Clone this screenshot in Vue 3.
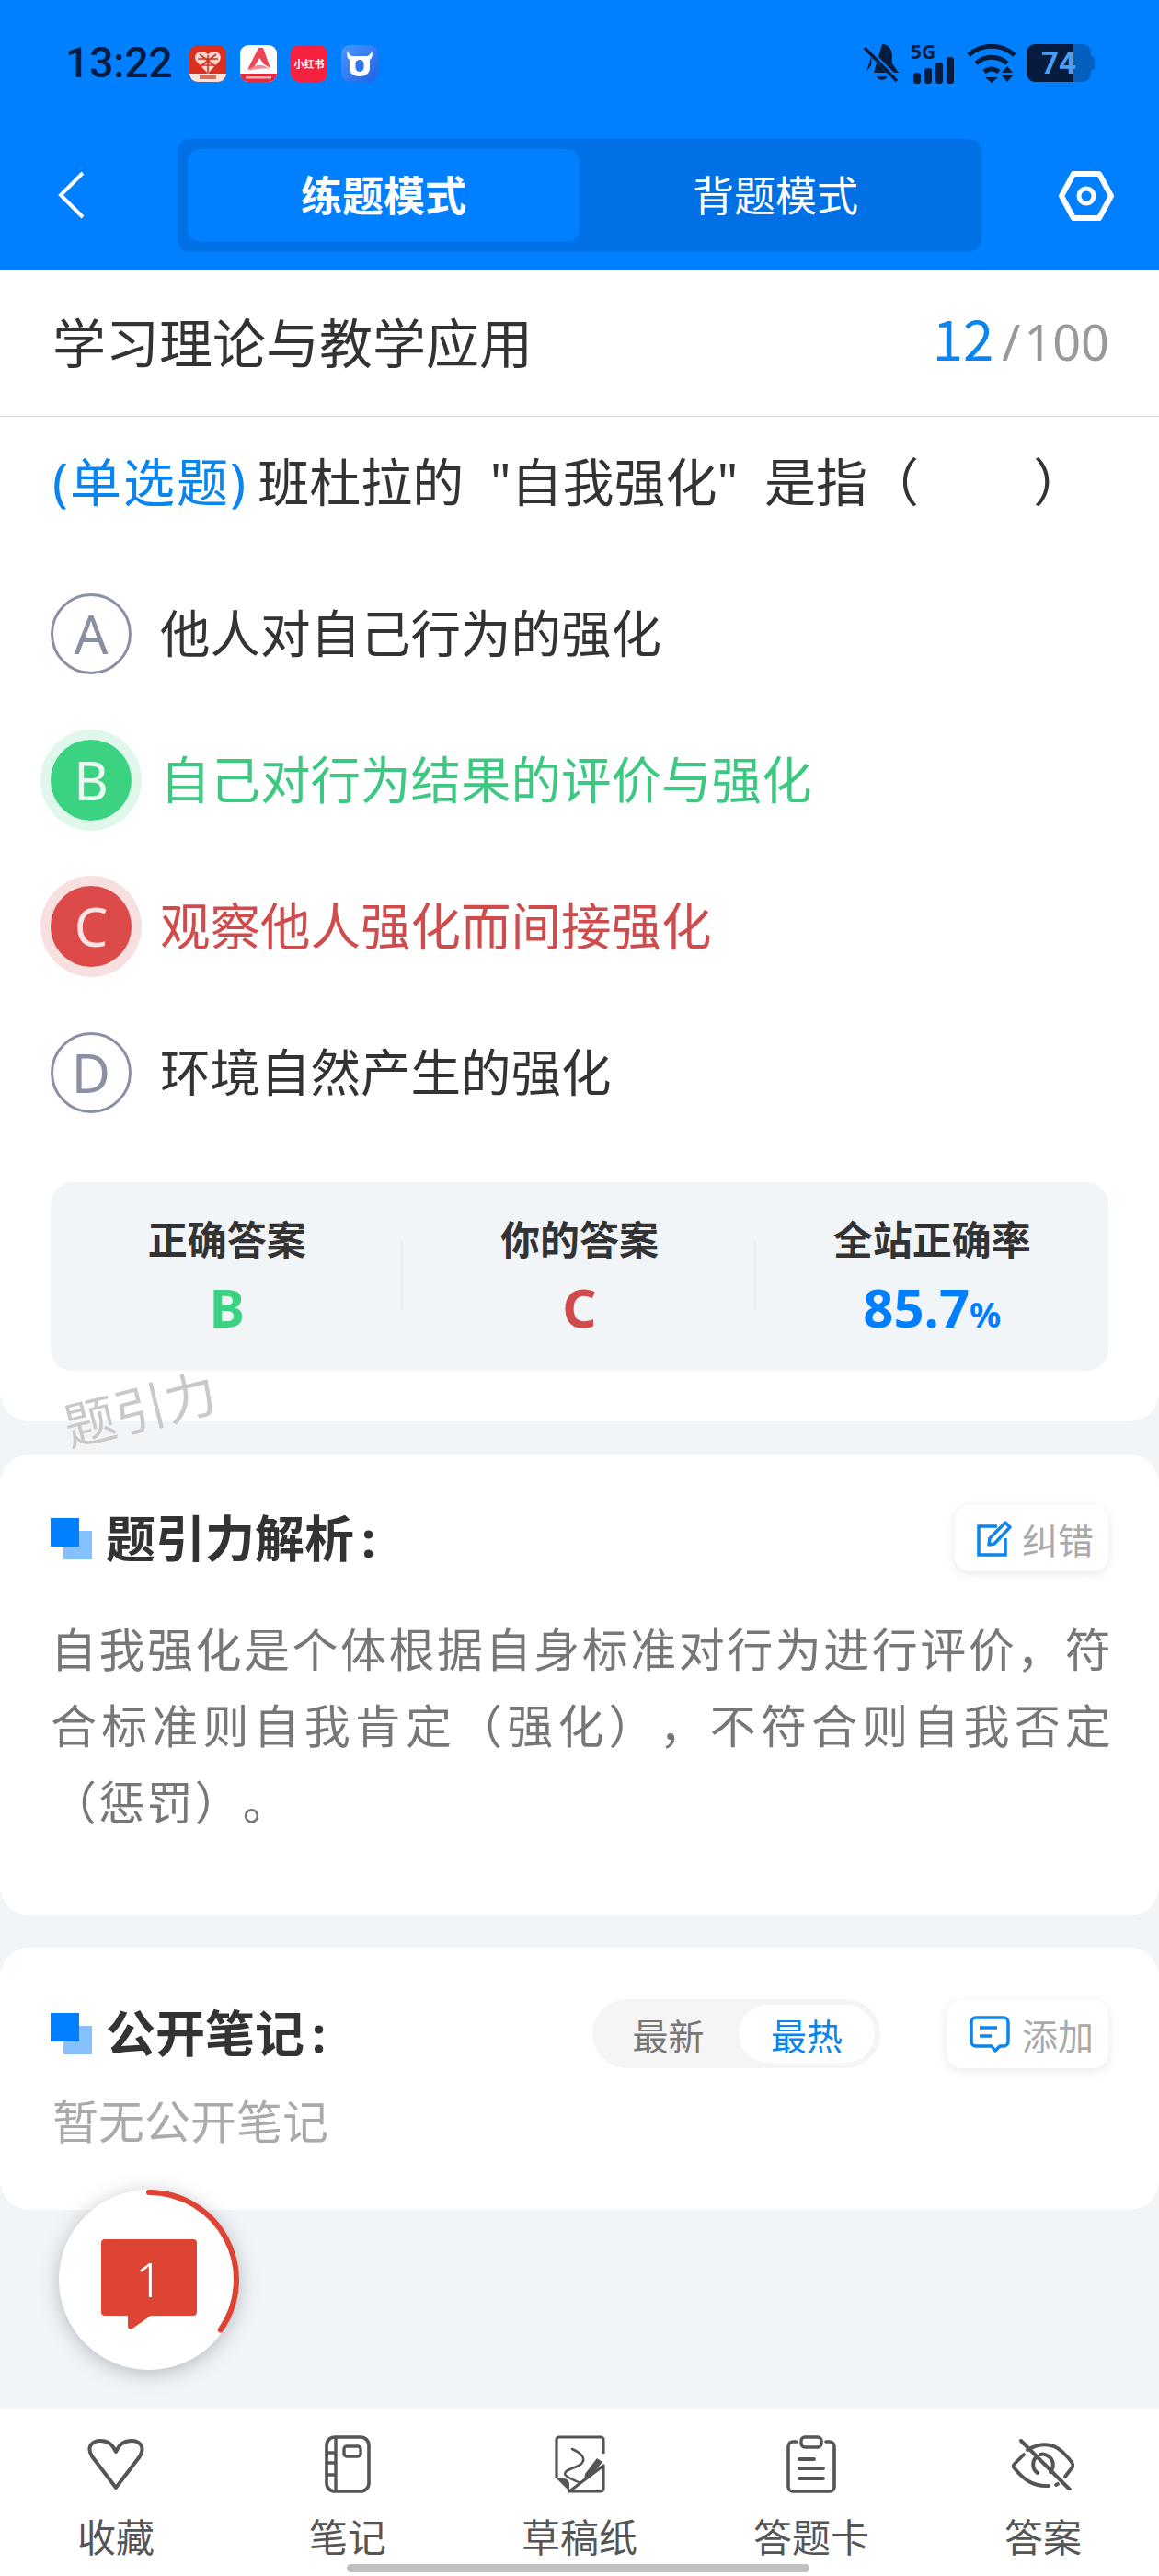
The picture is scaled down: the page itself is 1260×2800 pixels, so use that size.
<template>
  <div class="page">
    <header class="top">
      <div class="status">
        <span class="time">13:22</span>
        <div class="apps">
          <svg class="app" viewBox="0 0 40 40">
            <rect width="40" height="40" rx="9" fill="#d9301f" />
            <path d="M20 31 L7 17 C3 9 13 3 20 10 C27 3 37 9 33 17 Z" fill="#f6d8d0" />
            <path d="M20 11v19M9 15l22 0M12 22l16 0M11 10l18 14M29 10L11 24" stroke="#d9301f" stroke-width="1.6" />
            <path d="M0 31h40v0a9 9 0 0 1-9 9H9a9 9 0 0 1-9-9z" fill="#fbe3dc" />
            <rect x="11" y="33" width="18" height="4" fill="#d9705c" />
          </svg>
          <svg class="app" viewBox="0 0 40 40">
            <rect width="40" height="40" rx="9" fill="#fff" />
            <path d="M8 27 L20 3 L25 3 L33 25 L26 21 L21 14 L15 24 Z" fill="#ee4556" />
            <path d="M9 28 C16 20 24 20 32 26 C24 25 16 26 9 28 Z" fill="#f58a95" />
            <path d="M0 31h40a9 9 0 0 1-9 9H9a9 9 0 0 1-9-9z" fill="#e5283c" />
            <rect x="6" y="34" width="28" height="2.5" fill="#f7b5bb" />
          </svg>
          <div class="app red-book"><span>小红书</span></div>
          <svg class="app" viewBox="0 0 40 40">
            <defs>
              <linearGradient id="ox" x1="0" y1="0" x2="1" y2="1">
                <stop offset="0" stop-color="#4a97fb" />
                <stop offset="1" stop-color="#1f62e6" />
              </linearGradient>
            </defs>
            <rect width="40" height="40" rx="9" fill="url(#ox)" />
            <path d="M7 6 C8 10 10 12 13 12 H27 C30 12 32 10 33 6 C35 11 33 15 31 16 V25 C31 31 26 34 20 34 C14 34 9 31 9 25 V16 C7 15 5 11 7 6 Z" fill="#fff" />
            <rect x="15.5" y="16" width="9" height="13" rx="4.5" fill="#2f77ee" />
          </svg>
        </div>
        <div class="sys">
          <svg width="40" height="44" viewBox="0 0 40 44">
            <path d="M20 1 C28 1 31 8 31 15 L31 22 L38 32 H11 Z M3 31 L8 24 L9 12 Z" fill="#051c3f" />
            <path d="M14 36 H26 C25 41 15 41 14 36 Z" fill="#051c3f" />
            <path d="M2 5 L37 40" stroke="#0080ff" stroke-width="6" />
            <path d="M1 5 L36 41" stroke="#051c3f" stroke-width="3.6" />
          </svg>
          <div class="signal">
            <span class="five-g">5G</span>
            <div class="bars">
              <i style="height: 12px"></i>
              <i style="height: 17px"></i>
              <i style="height: 23px"></i>
              <i style="height: 29px"></i>
            </div>
          </div>
          <svg width="54" height="42" viewBox="0 0 54 42">
            <path d="M2 12 C16 -1 38 -1 52 12" fill="none" stroke="#051c3f" stroke-width="5" />
            <path d="M10 21 C20 12 34 12 44 21" fill="none" stroke="#051c3f" stroke-width="5" />
            <path d="M19 30 C24 26 30 26 35 30" fill="none" stroke="#051c3f" stroke-width="5" />
            <path d="M20 36 H34 L27 42 Z M44 24 L50 31 H38 Z M38 34 H50 L44 41 Z" fill="#051c3f" />
          </svg>
          <div class="battery">
            <div class="battery-fill"></div>
            <span class="battery-num">74</span>
          </div>
        </div>
      </div>
      <div class="nav">
        <svg class="back" width="30" height="52" viewBox="0 0 30 52">
          <path d="M27 2 L3 26 L27 50" fill="none" stroke="#fff" stroke-width="4" />
        </svg>
        <div class="mode-track">
          <div class="mode active">练题模式</div>
          <div class="mode">背题模式</div>
        </div>
        <svg class="gear" width="60" height="54" viewBox="0 0 60 54">
          <path d="M16 3 H44 L57 27 L44 51 H16 L3 27 Z" fill="none" stroke="#fff" stroke-width="6" stroke-linejoin="round" />
          <circle cx="30" cy="27" r="8" fill="none" stroke="#fff" stroke-width="5" />
        </svg>
      </div>
    </header>

    <section class="card question-card">
      <div class="title-row">
        <span class="title">学习理论与教学应用</span>
        <span class="progress"><b>12</b><i>/</i>100</span>
      </div>
      <p class="question"><span class="q-type">(单选题)</span> 班杜拉的 "自我强化" 是指（ &nbsp; &nbsp;<span class="q-close">）</span></p>
      <div class="options">
        <div v-for="opt in options" :key="opt.key" :class="['option', opt.state]">
          <span class="bullet">{{ opt.key }}</span>
          <span class="opt-text">{{ opt.text }}</span>
        </div>
      </div>
      <div class="stats">
        <div class="stat">
          <span class="stat-label">正确答案</span>
          <span class="stat-value green">B</span>
        </div>
        <div class="stat">
          <span class="stat-label">你的答案</span>
          <span class="stat-value red">C</span>
        </div>
        <div class="stat">
          <span class="stat-label">全站正确率</span>
          <span class="stat-value blue">85.7<small>%</small></span>
        </div>
      </div>
      <span class="watermark">题引力</span>
    </section>

    <section class="card analysis">
      <div class="sec-head">
        <span class="mark"></span>
        <h3>题引力解析<em>:</em></h3>
        <button class="mini-btn">
          <svg width="38" height="40" viewBox="0 0 38 40">
            <path d="M22 7 H2 V38 H31 V20" fill="none" stroke="#0d84e8" stroke-width="3.5" />
            <path d="M13 27 L14 20 L31 3 L36 8 L19 26 Z" fill="none" stroke="#0d84e8" stroke-width="3.5" stroke-linejoin="round" />
          </svg>
          <span>纠错</span>
        </button>
      </div>
      <p class="analysis-text">自我强化是个体根据自身标准对行为进行评价，符合标准则自我肯定（强化），不符合则自我否定（惩罚）。</p>
    </section>

    <section class="card notes">
      <div class="sec-head">
        <span class="mark"></span>
        <h3>公开笔记<em>:</em></h3>
        <div class="seg">
          <span class="seg-item">最新</span>
          <span class="seg-item on">最热</span>
        </div>
        <button class="mini-btn add">
          <svg width="44" height="40" viewBox="0 0 44 40">
            <path d="M7 2 H37 A5 5 0 0 1 42 7 V28 A5 5 0 0 1 37 33 H33 L28 38 L24 33 H7 A5 5 0 0 1 2 28 V7 A5 5 0 0 1 7 2 Z" fill="none" stroke="#0d84e8" stroke-width="3.5" stroke-linejoin="round" />
            <path d="M11 13 H30 M11 22 H24" stroke="#0d84e8" stroke-width="3.5" />
          </svg>
          <span>添加</span>
        </button>
      </div>
      <p class="empty">暂无公开笔记</p>
    </section>

    <div class="float-btn">
      <svg width="196" height="196" viewBox="0 0 196 196">
        <path d="M98 3 A95 95 0 0 1 175.8 152.5" fill="none" stroke="#dd4433" stroke-width="6" stroke-linecap="round" />
        <path d="M50 54 H146 A4 4 0 0 1 150 58 V133 A4 4 0 0 1 146 137 H100 L80 151 Q75 153 75 148 V137 H50 A4 4 0 0 1 46 133 V58 A4 4 0 0 1 50 54 Z" fill="#dd4433" />
        <text x="98" y="117" class="float-num">1</text>
      </svg>
    </div>

    <nav class="tabbar">
      <div class="tab">
        <div class="tab-icon">
          <svg width="64" height="56" viewBox="0 0 64 56">
            <path d="M32 53 L6 19 C-1 7 8 2 15 2 C23 2 29 7 32 14 C35 7 41 2 49 2 C56 2 65 7 58 19 Z" fill="none" stroke="#555" stroke-width="4" stroke-linejoin="round" />
          </svg>
        </div>
        <span>收藏</span>
      </div>
      <div class="tab">
        <div class="tab-icon">
          <svg width="50" height="63" viewBox="0 0 50 63">
            <rect x="2" y="2" width="46" height="59" rx="9" fill="none" stroke="#555" stroke-width="3.6" />
            <path d="M12 2 V61 M2 19 H12 M2 30 H12 M2 43 H12" stroke="#555" stroke-width="3.4" />
            <rect x="21" y="12" width="18" height="11" rx="3" fill="none" stroke="#555" stroke-width="3.4" />
          </svg>
        </div>
        <span>笔记</span>
      </div>
      <div class="tab">
        <div class="tab-icon">
          <svg width="55" height="63" viewBox="0 0 55 63">
            <path d="M2 47 V5 A3 3 0 0 1 5 2 H50 A3 3 0 0 1 53 5 V20 M53 33 V58 A3 3 0 0 1 50 61 H16 Z" fill="none" stroke="#555" stroke-width="3.2" stroke-linejoin="round" />
            <path d="M2 47 H10 A6 6 0 0 1 16 53 V61 Z" fill="#555" />
            <path d="M19 15 C28 19 35 25 29 31 C23 36 11 37 11 42 C12 46 22 49 28 52" fill="none" stroke="#555" stroke-width="2.6" stroke-linecap="round" />
            <path d="M46 25 L52 29 L38 46 L32 49 L33 42 Z" fill="#555" />
          </svg>
        </div>
        <span>草稿纸</span>
      </div>
      <div class="tab">
        <div class="tab-icon">
          <svg width="54" height="63" viewBox="0 0 54 63">
            <path d="M11 7 H7 A5 5 0 0 0 2 12 V56 A5 5 0 0 0 7 61 H47 A5 5 0 0 0 52 56 V12 A5 5 0 0 0 47 7 H43" fill="none" stroke="#555" stroke-width="3.6" stroke-linecap="round" />
            <rect x="16" y="2" width="22" height="11" rx="4" fill="none" stroke="#555" stroke-width="3.4" />
            <path d="M14 26 H30 M14 36 H40 M14 47 H40" stroke="#555" stroke-width="3.8" stroke-linecap="round" />
          </svg>
        </div>
        <span>答题卡</span>
      </div>
      <div class="tab">
        <div class="tab-icon">
          <svg width="68" height="56" viewBox="0 0 68 56">
            <path d="M13 17 L3 27 C1 29 1 30 3 32 C12 43 22 52 40 51 M17 12 C33 3 46 6 55 14 C60 19 64 23 66 27 C67 29 66 31 64 33 L58 41 M50 49 L48 50" fill="none" stroke="#555" stroke-width="3.8" stroke-linecap="round" />
            <path d="M26 20 C22 25 22 33 28 37 M42 36 C46 31 46 23 40 19 C37 17 34 16 31 17" fill="none" stroke="#555" stroke-width="4" stroke-linecap="round" />
            <path d="M10 2 L63 55" stroke="#555" stroke-width="4" stroke-linecap="round" />
          </svg>
        </div>
        <span>答案</span>
      </div>
      <span class="home-bar"></span>
    </nav>
  </div>
</template>

<script setup>
const options = [
  { key: 'A', text: '他人对自己行为的强化', state: '' },
  { key: 'B', text: '自己对行为结果的评价与强化', state: 'right' },
  { key: 'C', text: '观察他人强化而间接强化', state: 'wrong' },
  { key: 'D', text: '环境自然产生的强化', state: '' },
]
</script>

<style>
body {
  margin: 0;
  background: #f2f5f8;
}
</style>

<style scoped>
.page {
  position: relative;
  width: 1260px;
  height: 2800px;
  display: flex;
  flex-direction: column;
  overflow: hidden;
  background: #f2f5f8;
  font-family: "Noto Sans", "Noto Sans CJK SC", sans-serif;
  color: #333;
  text-spacing-trim: space-all;
}

/* header */
.top {
  height: 294px;
  flex: none;
  background: #0080ff;
  box-sizing: border-box;
  padding-top: 47px;
}

.status {
  display: flex;
  align-items: center;
  height: 43px;
  padding: 0 70px 0 71px;
}

.time {
  width: 135px;
  font-family: Roboto, sans-serif;
  font-size: 46px;
  font-weight: 500;
  color: #051c3f;
  line-height: 43px;
}

.apps {
  display: flex;
  gap: 15px;
}

.app {
  width: 40px;
  height: 40px;
  display: block;
}

.red-book {
  display: flex;
  align-items: center;
  justify-content: center;
  border-radius: 9px;
  background: #f6213f;
  color: #fff;
  font-size: 11px;
  font-weight: 700;
  white-space: nowrap;
}

.sys {
  margin-left: auto;
  display: flex;
  align-items: center;
  gap: 11px;
}

.signal {
  position: relative;
  width: 50px;
  height: 44px;
}

.five-g {
  position: absolute;
  left: 0;
  top: -1px;
  font-size: 21px;
  font-weight: 700;
  line-height: 20px;
  color: #051c3f;
}

.bars {
  position: absolute;
  left: 3px;
  right: 0;
  bottom: 0;
  display: flex;
  align-items: flex-end;
  gap: 4px;
}

.bars i {
  width: 8px;
  border-radius: 3px;
  background: #051c3f;
}

.battery {
  position: relative;
  display: flex;
  width: 74px;
  height: 41px;
}

.battery::after {
  content: "";
  position: absolute;
  left: 70px;
  top: 13px;
  width: 4px;
  height: 15px;
  border-radius: 0 3px 3px 0;
  background: #0460bf;
}

.battery-fill {
  width: 70px;
  height: 100%;
  border-radius: 9px;
  background: linear-gradient(90deg, #051c3f 51px, #0460bf 51px);
}

.battery-num {
  position: absolute;
  left: 16px;
  top: 0;
  font-family: Roboto, sans-serif;
  font-size: 33px;
  line-height: 41px;
  font-weight: 700;
  color: #4f9df2;
}

.nav {
  margin-top: 61px;
  display: flex;
  align-items: center;
  padding-left: 63px;
}

.back {
  flex: none;
  margin-bottom: 2px;
}

.mode-track {
  margin-left: 100px;
  width: 874px;
  height: 123px;
  box-sizing: border-box;
  padding: 11px;
  display: flex;
  border-radius: 14px;
  background: #0070e4;
}

.mode {
  flex: 1;
  display: flex;
  align-items: center;
  justify-content: center;
  box-sizing: border-box;
  padding-bottom: 4px;
  border-radius: 14px;
  color: #fff;
  font-size: 45px;
}

.mode.active {
  background: #0080ff;
  font-weight: 700;
}

.gear {
  margin-left: 84px;
  flex: none;
}

/* cards */
.card {
  position: relative;
  flex: none;
  background: #fff;
  border-radius: 32px;
}

.question-card {
  border-radius: 0 0 32px 32px;
  padding-bottom: 55px;
}

.title-row {
  height: 158px;
  padding: 0 54px 0 57px;
  display: flex;
  align-items: center;
  justify-content: space-between;
  border-bottom: 1px solid #d9d9d9;
}

.title {
  font-size: 58px;
  padding-bottom: 7px;
  color: #333;
}

.progress {
  font-size: 54px;
  padding-bottom: 5px;
  color: #999;
}

.progress b {
  font-family: "Noto Sans CJK SC", sans-serif;
  font-weight: 400;
  font-size: 60px;
  line-height: 1;
  color: #0a84ee;
}

.progress i {
  font-style: normal;
  margin: 0 4px 0 9px;
}

.question {
  margin: 0;
  padding: 35px 57px 0;
  font-size: 56px;
  line-height: 70px;
  word-spacing: 14px;
  color: #333;
  white-space: nowrap;
}

.q-type {
  margin-right: -17.5px;
  letter-spacing: 2.1px;
  color: #0a84ee;
}

.q-close {
  margin-left: 10px;
}

.options {
  margin-top: 51px;
}

.option {
  height: 159px;
  display: flex;
  align-items: center;
  padding-left: 55px;
}

.bullet {
  flex: none;
  width: 88px;
  height: 88px;
  box-sizing: border-box;
  border: 3px solid #8a8fa3;
  border-radius: 50%;
  display: flex;
  align-items: center;
  justify-content: center;
  font-size: 58px;
  line-height: 1;
  color: #8a8fa3;
}

.opt-text {
  margin-left: 31px;
  padding-bottom: 6px;
  font-size: 54.5px;
  color: #333;
}

.option.right .bullet {
  border: none;
  background: #3bd282;
  color: #e8fbf1;
  box-shadow: 0 0 0 11px #e0f8ec;
}

.option.right .opt-text {
  color: #3cc880;
}

.option.wrong .bullet {
  border: none;
  background: #dc4a4a;
  color: #fbe4e4;
  box-shadow: 0 0 0 11px #f9e0e0;
}

.option.wrong .opt-text {
  color: #d04c4c;
}

.stats {
  margin: 40px 55px 0 55px;
  height: 205px;
  display: flex;
  align-items: center;
  border-radius: 24px;
  background: #f2f5f8;
}

.stat {
  flex: 1;
  position: relative;
  display: flex;
  flex-direction: column;
  align-items: center;
}

.stat + .stat::before {
  content: "";
  position: absolute;
  left: -2px;
  top: 34px;
  bottom: 36px;
  width: 2px;
  background: #ebeef1;
}

.stat-label {
  margin-top: 3px;
  font-size: 43px;
  line-height: 60px;
  font-weight: 700;
  color: #333;
}

.stat-value {
  margin-top: 3px;
  height: 80px;
  font-size: 58px;
  line-height: 80px;
  font-weight: 700;
}

.stat-value small {
  font-size: 38px;
  line-height: 1;
}

.green {
  color: #3bd282;
}

.red {
  color: #d04c4c;
}

.blue {
  color: #0080ff;
}

.watermark {
  position: absolute;
  left: 68px;
  top: 1202px;
  z-index: 2;
  font-size: 56px;
  line-height: 70px;
  color: #c9c9c9;
  transform: rotate(-14deg);
}

.analysis {
  margin-top: 36px;
  padding: 55px 55px 81px 55px;
}

.notes {
  margin-top: 35px;
  padding: 56px 55px 61px 55px;
}

.sec-head {
  display: flex;
  align-items: center;
  height: 72px;
}

.notes .sec-head {
  height: 75px;
}

.mark {
  position: relative;
  flex: none;
  width: 45px;
  height: 45px;
  margin-right: 15px;
}

.mark::before,
.mark::after {
  content: "";
  position: absolute;
  width: 31px;
  height: 31px;
}

.mark::before {
  right: 0;
  bottom: 0;
  background: #85c1ff;
}

.mark::after {
  left: 0;
  top: 0;
  background: #0080ff;
}

.sec-head h3 {
  margin: 0;
  padding-bottom: 6px;
  font-size: 54px;
  font-weight: 700;
  color: #333;
}

.sec-head h3 em {
  margin-left: 8px;
  font-style: normal;
}

.mini-btn {
  margin-left: auto;
  height: 72px;
  width: 167px;
  box-sizing: border-box;
  padding: 0 0 0 24px;
  display: flex;
  align-items: center;
  gap: 11px;
  border: none;
  border-radius: 16px;
  background: #fff;
  box-shadow: 0 3px 12px rgba(0, 0, 0, 0.09);
  font-family: inherit;
  font-size: 39px;
  color: #aaa;
}

.mini-btn span {
  white-space: nowrap;
}

.mini-btn.add {
  margin-left: 72px;
  width: 176px;
  height: 74px;
  padding-left: 25px;
  gap: 13px;
}

.seg {
  margin-left: auto;
  width: 313px;
  height: 75px;
  box-sizing: border-box;
  padding: 6px;
  display: flex;
  align-items: center;
  border-radius: 38px;
  background: #f5f5f5;
  font-size: 39px;
}

.seg-item {
  flex: 1;
  height: 63px;
  display: flex;
  align-items: center;
  justify-content: center;
  color: #777;
}

.seg-item.on {
  flex: none;
  width: 148px;
  border-radius: 32px;
  background: #fff;
  color: #0a84ee;
}

.analysis-text {
  margin: 44px -5px 0 0;
  font-size: 50px;
  line-height: 83px;
  letter-spacing: 2.2px;
  text-align: justify;
  color: #777;
}

.empty {
  margin: 23px 0 0 2px;
  font-size: 50px;
  line-height: 70px;
  color: #aaa;
}

/* floating bubble */
.float-btn {
  position: absolute;
  left: 64px;
  top: 2380px;
  width: 196px;
  height: 196px;
  border-radius: 50%;
  background: #fff;
  box-shadow: 0 4px 22px rgba(70, 80, 90, 0.35);
}

.float-btn svg {
  display: block;
}

.float-num {
  font-size: 52px;
  font-weight: 300;
  fill: #fff;
  text-anchor: middle;
}

/* bottom bar */
.tabbar {
  position: relative;
  margin-top: auto;
  height: 182px;
  flex: none;
  display: flex;
  background: #fff;
}

.tab {
  flex: 1;
  display: flex;
  flex-direction: column;
  align-items: center;
  font-size: 42px;
  color: #555;
}

.tab-icon {
  margin-top: 29px;
  height: 63px;
  display: flex;
  align-items: center;
}

.tab-icon svg {
  display: block;
}

.tab span {
  margin-top: 18px;
  line-height: 60px;
}

.tab .home-bar {
  margin: 0;
}

.home-bar {
  position: absolute;
  left: 377px;
  bottom: 4px;
  width: 503px;
  height: 9px;
  border-radius: 5px;
  background: #c0c0c0;
}
</style>
